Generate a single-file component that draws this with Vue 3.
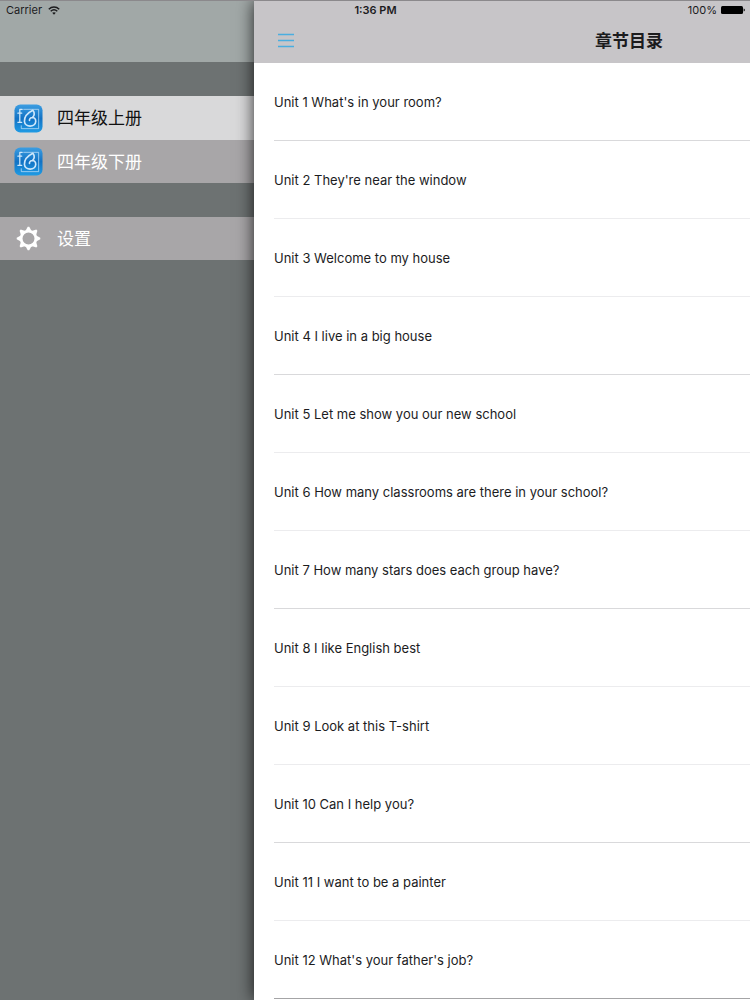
<template>
  <div class="app">
    <div class="status-bar">
      <div class="carrier">
        <span>Carrier</span>
        <svg class="wifi" viewBox="0 0 12 9" aria-hidden="true">
          <path d="M0.8 3.2 C3.8 0.4 8.2 0.4 11.2 3.2" />
          <path d="M2.7 5.2 C4.6 3.5 7.4 3.5 9.3 5.2" />
          <path class="dot" d="M4.2 6.8 C5.2 5.9 6.8 5.9 7.8 6.8 L6 8.7 Z" />
        </svg>
      </div>
      <div class="time">1:36 PM</div>
      <div class="battery">
        <span>100%</span>
        <svg class="battery-icon" viewBox="0 0 24 8" aria-hidden="true">
          <rect x="0" y="0" width="22" height="8" rx="1.5" />
          <path d="M22.6 2.5 C24.2 2.8 24.2 5.2 22.6 5.5 Z" />
        </svg>
      </div>
    </div>

    <aside class="sidebar">
      <div class="sidebar-header"></div>
      <nav class="menu">
        <div class="menu-group">
          <button
            v-for="(book, index) in books"
            :key="book"
            type="button"
            class="menu-item"
            :class="{ active: index === current }"
            @click="current = index"
          >
            <svg class="menu-icon" viewBox="0 0 30 30" aria-hidden="true">
              <defs>
                <linearGradient :id="'book' + index" x1="0" y1="0" x2="0" y2="1">
                  <stop offset="0" stop-color="#3c9ee2" />
                  <stop offset="0.5" stop-color="#1272c4" />
                  <stop offset="1" stop-color="#1f9be4" />
                </linearGradient>
              </defs>
              <rect x="0.5" y="0.5" width="29" height="29" rx="6" :fill="`url(#book${index})`" />
              <g fill="none" stroke="#cfe8fb" stroke-linecap="round" stroke-linejoin="round">
                <path stroke-width="1.3" d="M8.5 5.5 H6 V19 M4 9.5 H8 M4 19 H8" />
                <path stroke-width="0.9" opacity="0.8" d="M10 5.5 H25.5 V25.5 H7.5 V22.5" />
                <path
                  stroke-width="1.7"
                  d="M19.5 6.5 C14.5 9 10.5 13 10.8 18 C11.2 24.5 22.2 24.5 22.5 18 C22.6 15.5 21 14 19 14 C17 14 15.8 15.5 16 17 M19.5 6.5 C21.5 9 21.5 12 19 14"
                />
              </g>
            </svg>
            <span>{{ book }}</span>
          </button>
        </div>
        <div class="menu-group">
          <button type="button" class="menu-item">
            <svg class="menu-icon" viewBox="0 0 30 30" aria-hidden="true">
              <g fill="#fff">
                <path
                  v-for="n in 8"
                  :key="n"
                  d="M11.4 8 L14.2 2.8 H15.8 L18.6 8 Z"
                  :transform="`rotate(${n * 45} 15 15)`"
                />
              </g>
              <circle cx="15" cy="15" r="7.6" fill="none" stroke="#fff" stroke-width="2.8" />
            </svg>
            <span>设置</span>
          </button>
        </div>
      </nav>
    </aside>

    <main class="content">
      <header class="nav-bar">
        <button type="button" class="menu-button" aria-label="菜单">
          <svg viewBox="0 0 18 16" aria-hidden="true">
            <path d="M1 1.5 H17 M1 7.5 H17 M1 13.5 H17" />
          </svg>
        </button>
        <h1>章节目录</h1>
      </header>
      <ul class="units">
        <li v-for="(unit, index) in units" :key="unit">Unit {{ index + 1 }} {{ unit }}</li>
      </ul>
    </main>
  </div>
</template>

<script setup>
import { ref } from 'vue'

const current = ref(0)

const books = ['四年级上册', '四年级下册']

const units = [
  "What's in your room?",
  "They're near the window",
  'Welcome to my house',
  'I live in a big house',
  'Let me show you our new school',
  'How many classrooms are there in your school?',
  'How many stars does each group have?',
  'I like English best',
  'Look at this T-shirt',
  'Can I help you?',
  'I want to be a painter',
  "What's your father's job?"
]
</script>

<style>
body {
  margin: 0;
  background: #6d7272;
}
</style>

<style scoped>
.app {
  position: relative;
  display: flex;
  min-height: 100vh;
  overflow: hidden;
  box-sizing: border-box;
  border-top: 1px solid #8b898c;
  background: #6d7272;
  color: #1c1c1e;
  font-family: Inter, "Noto Sans CJK SC", sans-serif;
  font-size: 13px;
}

/* the status bar lies over both the drawer and the page */
.status-bar {
  position: absolute;
  top: 0;
  left: 0;
  right: 0;
  z-index: 2;
  display: grid;
  grid-template-columns: 1fr auto 1fr;
  align-items: center;
  height: 18px;
  padding: 0 5px 0 6px;
  font-size: 11px;
}

.carrier,
.battery {
  display: flex;
  align-items: center;
  gap: 4px;
}

.carrier {
  gap: 6px;
}

.battery {
  justify-content: flex-end;
}

.time {
  font-weight: 600;
}

.wifi {
  width: 12px;
  height: 9px;
  fill: none;
  stroke: #1c1c1e;
  stroke-width: 1.5;
}

.wifi .dot {
  fill: #1c1c1e;
  stroke: none;
}

.battery-icon {
  width: 24px;
  height: 8px;
  fill: #000;
}

.sidebar {
  flex: 0 0 254px;
}

.sidebar-header {
  height: 61px;
  background: #a1a8a7;
}

.menu {
  display: flex;
  flex-direction: column;
  gap: 34px;
  padding-top: 34px;
}

.menu-item {
  display: flex;
  align-items: center;
  gap: 14px;
  width: 100%;
  height: 43px;
  padding: 0 14px;
  border: 0;
  background: #a8a6a8;
  color: #fff;
  font: inherit;
  font-size: 17px;
  line-height: 24px;
  text-align: left;
}

.menu-item.active {
  height: 44px;
  background: #d9d9da;
  color: #111;
}

.menu-icon {
  width: 29px;
  height: 29px;
}

/* the page keeps its full width and slides out to the right */
.content {
  position: relative;
  flex: 0 0 100%;
  background: #fff;
  box-shadow: 0 0 16px rgba(0, 0, 0, 0.8);
}

.nav-bar {
  display: grid;
  grid-template-columns: 1fr auto 1fr;
  align-items: center;
  height: 62px;
  box-sizing: border-box;
  padding: 18px 20px 0;
  background: #c7c5c8;
}

.nav-bar h1 {
  margin: 0;
  font-size: 17px;
  font-weight: 600;
  line-height: 24px;
}

.menu-button {
  display: flex;
  justify-self: start;
  padding: 3px;
  border: 0;
  background: none;
}

.menu-button svg {
  width: 18px;
  height: 16px;
  fill: none;
  stroke: #4aaee0;
  stroke-width: 1.3;
}

.units {
  margin: 0;
  padding: 0 0 0 20px;
  list-style: none;
}

.units li {
  display: flex;
  align-items: center;
  height: 78px;
  box-sizing: border-box;
  border-bottom: 1px solid #ececee;
}

.units li:nth-child(3n + 1) {
  border-color: #d9d9db;
}

.units li:last-child {
  border-color: #a4a4a6;
}
</style>
